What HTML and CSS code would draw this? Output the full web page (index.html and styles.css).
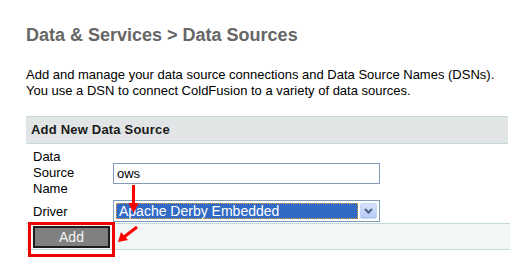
FILE: index.html
```html
<!DOCTYPE html>
<html lang="en">
<head>
    <meta charset="UTF-8">
    <title>Data Sources</title>
    <link rel="stylesheet" href="styles.css">
</head>
<body>
    <div class="page">
        <h1 class="title">Data &amp; Services &gt; Data Sources</h1>
        <p class="intro">Add and manage your data source connections and Data Source Names (DSNs).<br>You use a DSN to connect ColdFusion to a variety of data sources.</p>

        <div class="panel">
            <div class="panel-head">Add New Data Source</div>
            <div class="form">
                <label class="label">Data<br>Source<br>Name</label>
                <div class="field"><div class="input">ows</div></div>
                <label class="label driver">Driver</label>
                <div class="field">
                    <div class="select">
                        <span class="option">Apache Derby Embedded</span>
                        <span class="drop">
                            <svg width="9" height="6" viewBox="0 0 9 6"><path d="M1 1 L4.5 4.5 L8 1" fill="none" stroke="#4d6185" stroke-width="2"/></svg>
                        </span>
                    </div>
                </div>
            </div>
            <div class="panel-foot">
                <span class="add-btn">Add</span>
            </div>
        </div>
    </div>

    <!-- callout annotations -->
    <div class="callout-box"></div>
    <svg class="arrows" width="526" height="275" viewBox="0 0 526 275">
        <line x1="133.5" y1="185" x2="133.5" y2="205" stroke="#f00" stroke-width="3"/>
        <polygon points="128.5,203 138.5,203 133.5,213" fill="#f00"/>
        <line x1="137" y1="227" x2="124" y2="237" stroke="#f00" stroke-width="3"/>
        <polygon points="118,242 121,232 128,240" fill="#f00"/>
    </svg>
</body>
</html>
```

FILE: styles.css
```css
body {
    margin: 0;
    font-family: "Liberation Sans", Arial, sans-serif;
    color: #000;
    background: #fff;
}
.page {
    padding: 25px 0 0 26px;
}
.title {
    margin: 0;
    font-size: 18px;
    line-height: 21px;
    color: #666;
}
.intro {
    margin: 21px 0 0;
    font-size: 13px;
    line-height: 16px;
}
.panel {
    margin-top: 17px;
    width: 482px;
}
.panel-head {
    height: 26px;
    line-height: 26px;
    padding-left: 5px;
    background: #e1e5e5;
    border-top: 1px solid #c3d9db;
    border-bottom: 1px solid #c3d9db;
    font-size: 13px;
    font-weight: bold;
    letter-spacing: 0.2px;
    color: #1a1a1a;
}
.form {
    display: grid;
    grid-template-columns: 80px auto;
    row-gap: 3px;
    padding: 5px 0 1px 7px;
    font-size: 13px;
    line-height: 16px;
}
.label {
    display: flex;
    align-items: center;
}
.driver {
    padding-top: 2px;
}
.field {
    display: flex;
    align-items: center;
}
.input {
    box-sizing: border-box;
    width: 267px;
    height: 21px;
    border: 1px solid #7f9db9;
    padding: 2px 3px;
    font-size: 13px;
    line-height: 15px;
}
.select {
    box-sizing: border-box;
    display: flex;
    width: 267px;
    height: 22px;
    border: 1px solid #7f9db9;
    padding: 2px;
}
.option {
    flex: 1;
    background: #316ac5;
    color: #fff;
    outline: 1px dotted #e8a33a;
    outline-offset: -1px;
    padding-left: 3px;
    font-size: 14px;
    line-height: 16px;
}
.drop {
    width: 15px;
    margin-left: 2px;
    display: flex;
    align-items: center;
    justify-content: center;
    background: linear-gradient(#d7e3fc, #b4c8f6);
    border: 1px solid #c4d4f5;
    border-radius: 2px;
}
.panel-foot {
    width: 477px;
    height: 25px;
    background: #f2f6f6;
    border-top: 1px solid #c3d9db;
    border-bottom: 1px solid #c3d9db;
    display: flex;
    align-items: center;
    padding-left: 7px;
    box-sizing: content-box;
}
.add-btn {
    box-sizing: border-box;
    width: 77px;
    height: 22px;
    line-height: 18px;
    text-align: center;
    background: #808080;
    border: 2px solid #1e1e1e;
    color: #f4f4f4;
    font-size: 14px;
}
.callout-box {
    position: absolute;
    left: 28px;
    top: 222px;
    width: 81px;
    height: 29px;
    border: 3px solid #ee0000;
}
.arrows {
    position: absolute;
    left: 0;
    top: 0;
    pointer-events: none;
}
```
